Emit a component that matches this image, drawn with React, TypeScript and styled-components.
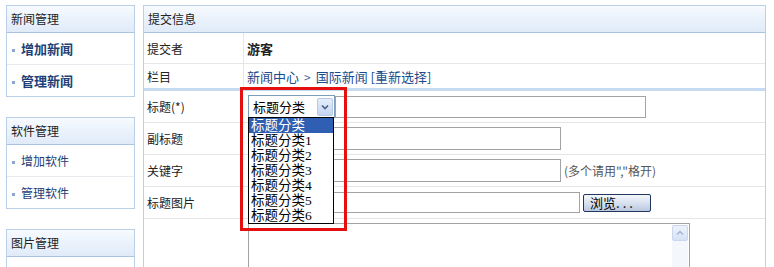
import React from "react";
import styled, { createGlobalStyle } from "styled-components";

const GlobalStyle = createGlobalStyle`
  html, body { margin: 0; padding: 0; background: #fff; }
  body {
    font-family: "Noto Sans CJK SC", "Liberation Sans", sans-serif;
    font-size: 12px;
    color: #222;
    overflow: hidden;
  }
`;

const Page = styled.div`
  display: flex;
  align-items: flex-start;
  gap: 8px;
  padding: 5px 0 0 6px;
  width: 774px;
  height: 267px;
  box-sizing: border-box;
  overflow: hidden;
`;

const Sidebar = styled.div`
  width: 129px;
  display: flex;
  flex-direction: column;
  gap: 20px;
  flex: none;
`;

const SideBox = styled.div`
  border: 1px solid #b9d0e8;
  background: #fff;
`;

const BarHeader = styled.div`
  height: 26px;
  line-height: 26px;
  padding-left: 4px;
  border-bottom: 1px solid #a9c4e3;
  background: linear-gradient(#f7faff, #e6effa 70%, #e0ebf8);
  color: #222;
  font-size: 12px;
`;

const SideItem = styled.div<{ $bold?: boolean }>`
  height: 31px;
  display: flex;
  align-items: center;
  padding-left: 5px;
  color: #1d3f78;
  font-size: ${(p) => (p.$bold ? "13px" : "12px")};
  font-weight: ${(p) => (p.$bold ? 700 : 400)};
  & + & { border-top: 1px solid #e8ecf0; }
`;

const SideBlank = styled.div`
  height: 31px;
`;

const Bullet = styled.span`
  width: 3px;
  height: 3px;
  margin: 4px 6px 0 0;
  background: #8ca7c9;
  flex: none;
`;

const Main = styled.div`
  width: 623px;
  height: 300px;
  flex: none;
  border: 1px solid #b9d0e8;
  box-sizing: border-box;
`;

const MainHeader = styled(BarHeader)`
  padding-left: 4px;
`;

const InfoRow = styled.div<{ $h: number; $thick?: boolean }>`
  display: grid;
  grid-template-columns: 100px 1fr;
  height: ${(p) => p.$h}px;
  border-bottom: ${(p) => (p.$thick ? "3px solid #c6dbf1" : "1px solid #e6e6e6")};
`;

const InfoLabel = styled.div`
  display: flex;
  align-items: center;
  padding-left: 3px;
  border-right: 1px solid #e6e6e6;
`;

const InfoValue = styled.div<{ $bold?: boolean }>`
  display: flex;
  align-items: center;
  padding-left: 3px;
  font-weight: ${(p) => (p.$bold ? 700 : 400)};
  font-size: ${(p) => (p.$bold ? "13px" : "12px")};
  color: #222;
`;

const Link = styled.span`
  color: #1c4c8c;
  font-size: 13px;
`;

const Sep = styled.span`
  color: #4a6a99;
  margin: 0 5px;
`;

const FormRow = styled.div<{ $h?: number }>`
  display: grid;
  grid-template-columns: 104px 1fr;
  align-items: center;
  height: ${(p) => p.$h ?? 31}px;
  border-bottom: 1px solid #e6e6e6;
`;

const TopFormRow = styled(FormRow)`
  align-items: start;
  height: 60px;
  border-bottom: none;
`;

const FormLabel = styled.div`
  padding-left: 3px;
  font-size: 12px;
  color: #222;
`;

const Field = styled.div`
  display: flex;
  align-items: center;
`;

const TextInput = styled.input<{ $w: number; $h: number }>`
  width: ${(p) => p.$w}px;
  height: ${(p) => p.$h}px;
  box-sizing: border-box;
  border: 1px solid #a3a3a3;
  padding: 0;
  margin: 0;
  background: #fff;
  outline: none;
`;

const SelectWrap = styled.div`
  position: relative;
  width: 87px;
  height: 23px;
  flex: none;
`;

const SelectBox = styled.div`
  height: 23px;
  box-sizing: border-box;
  border: 1px solid #7f9db9;
  display: flex;
  align-items: center;
  justify-content: space-between;
  padding: 0 1px 0 4px;
  background: #fff;
  font-size: 13px;
  color: #000;
`;

const ArrowBtn = styled.div`
  width: 16px;
  height: 18px;
  box-sizing: border-box;
  border: 1px solid #b8c9e6;
  border-radius: 2px;
  background: linear-gradient(#e6eefc, #c4d4f2);
  display: flex;
  align-items: center;
  justify-content: center;
`;

const DropList = styled.div`
  position: absolute;
  left: 0;
  top: 22px;
  width: 86px;
  box-sizing: border-box;
  border: 1px solid #000;
  background: #fff;
  z-index: 2;
`;

const DropItem = styled.div<{ $active?: boolean }>`
  height: 15px;
  line-height: 15px;
  padding-left: 2px;
  font-size: 13.5px;
  font-family: "Liberation Serif", "Noto Sans CJK SC", serif;
  color: ${(p) => (p.$active ? "#fff" : "#000")};
  background: ${(p) => (p.$active ? "#2f5fb3" : "#fff")};
  white-space: nowrap;
`;

const Highlight = styled.div`
  position: absolute;
  left: -8px;
  top: -8px;
  width: 107px;
  height: 144px;
  box-sizing: border-box;
  border: 3px solid #e3100f;
  z-index: 3;
  pointer-events: none;
`;

const Hint = styled.span`
  margin-left: 3px;
  color: #555;
  font-size: 12px;
`;

const BrowseBtn = styled.button`
  margin-left: 3px;
  width: 68px;
  height: 18px;
  box-sizing: border-box;
  padding: 0 0 0 6px;
  border: 1px solid #20365e;
  border-radius: 2px;
  background: linear-gradient(#f4f7fc, #d2dcec 60%, #b9c7de);
  font-family: "Noto Sans CJK SC", sans-serif;
  font-size: 13px;
  line-height: 14px;
  color: #000;
  text-align: left;
`;

const Dots = styled.span`
  letter-spacing: 3px;
`;

const AreaBox = styled.div`
  margin-top: 4px;
  width: 442px;
  height: 60px;
  box-sizing: border-box;
  border: 1px solid #a3a3a3;
  display: flex;
  justify-content: flex-end;
  padding: 1px;
`;

const ScrollTrack = styled.div`
  width: 16px;
  background: #f4f7fc;
  display: flex;
  flex-direction: column;
`;

const ScrollUp = styled.div`
  height: 16px;
  box-sizing: border-box;
  border: 1px solid #c9d8ef;
  border-radius: 2px;
  background: linear-gradient(#eef3fc, #d6e2f6);
  display: flex;
  align-items: center;
  justify-content: center;
`;

const sideGroups = [
  { title: "新闻管理", bold: true, items: ["增加新闻", "管理新闻"] },
  { title: "软件管理", bold: false, items: ["增加软件", "管理软件"] },
  { title: "图片管理", bold: false, items: [] as string[] },
];

const options = ["标题分类", "标题分类1", "标题分类2", "标题分类3", "标题分类4", "标题分类5", "标题分类6"];

export default function App() {
  return (
    <>
      <GlobalStyle />
      <Page>
        <Sidebar>
          {sideGroups.map((g) => (
            <SideBox key={g.title}>
              <BarHeader>{g.title}</BarHeader>
              {g.items.length === 0 && <SideBlank />}
              {g.items.map((it) => (
                <SideItem key={it} $bold={g.bold}>
                  <Bullet />
                  {it}
                </SideItem>
              ))}
            </SideBox>
          ))}
        </Sidebar>
        <Main>
          <MainHeader>提交信息</MainHeader>
          <InfoRow $h={30}>
            <InfoLabel>提交者</InfoLabel>
            <InfoValue $bold>游客</InfoValue>
          </InfoRow>
          <InfoRow $h={24} $thick>
            <InfoLabel>栏目</InfoLabel>
            <InfoValue>
              <Link>新闻中心</Link>
              <Sep>&gt;</Sep>
              <Link>国际新闻 [重新选择]</Link>
            </InfoValue>
          </InfoRow>
          <FormRow $h={31}>
            <FormLabel>标题(*)</FormLabel>
            <Field>
              <SelectWrap>
                <SelectBox>
                  标题分类
                  <ArrowBtn>
                    <svg width="8" height="6" viewBox="0 0 8 6">
                      <path d="M1 1.5 L4 4.5 L7 1.5" fill="none" stroke="#4d6185" strokeWidth="1.6" />
                    </svg>
                  </ArrowBtn>
                </SelectBox>
                <DropList>
                  {options.map((o, i) => (
                    <DropItem key={o} $active={i === 0}>
                      {o}
                    </DropItem>
                  ))}
                </DropList>
                <Highlight />
              </SelectWrap>
              <TextInput $w={311} $h={22} />
            </Field>
          </FormRow>
          <FormRow>
            <FormLabel>副标题</FormLabel>
            <Field>
              <TextInput $w={313} $h={23} />
            </Field>
          </FormRow>
          <FormRow>
            <FormLabel>关键字</FormLabel>
            <Field>
              <TextInput $w={313} $h={23} />
              <Hint>(多个请用","格开)</Hint>
            </Field>
          </FormRow>
          <FormRow>
            <FormLabel>标题图片</FormLabel>
            <Field>
              <TextInput $w={332} $h={21} />
              <BrowseBtn>
                浏览<Dots>...</Dots>
              </BrowseBtn>
            </Field>
          </FormRow>
          <TopFormRow>
            <FormLabel />
            <AreaBox>
              <ScrollTrack>
                <ScrollUp>
                  <svg width="8" height="6" viewBox="0 0 8 6">
                    <path d="M1 4.5 L4 1.5 L7 4.5" fill="none" stroke="#9fb3d3" strokeWidth="1.4" />
                  </svg>
                </ScrollUp>
              </ScrollTrack>
            </AreaBox>
          </TopFormRow>
        </Main>
      </Page>
    </>
  );
}
